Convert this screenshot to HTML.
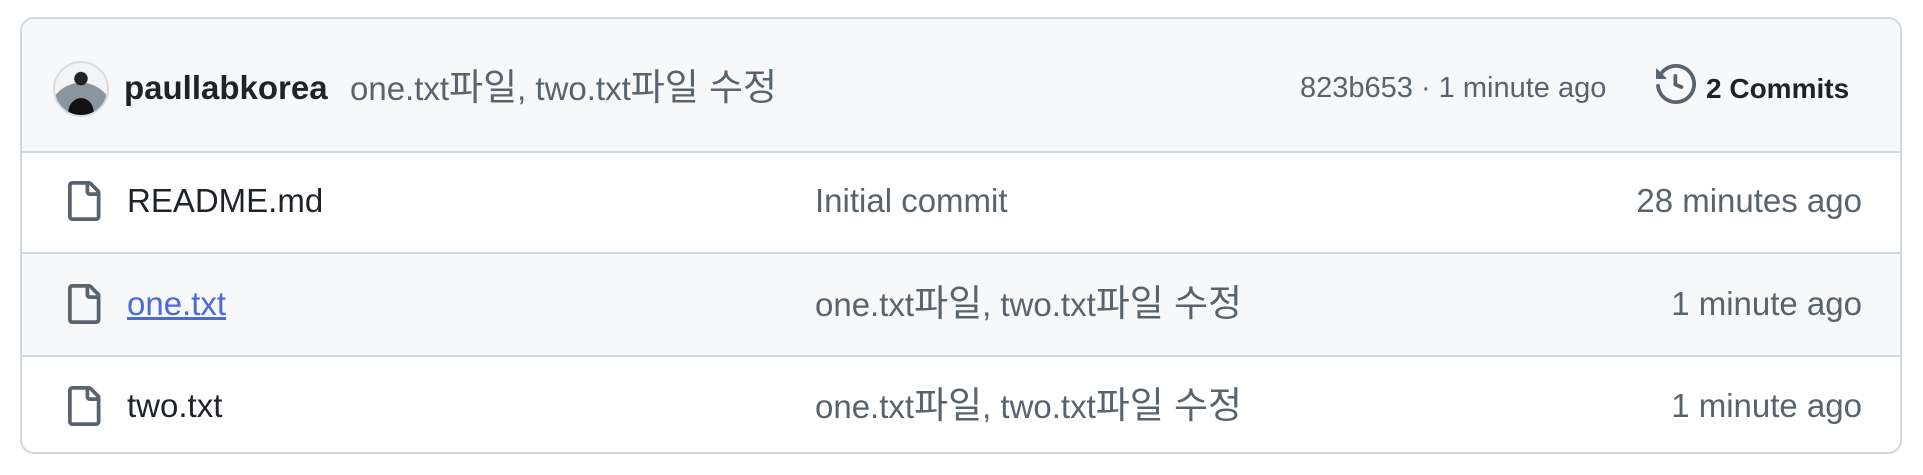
<!DOCTYPE html>
<html><head><meta charset="utf-8"><style>
body{margin:0;background:#fff;width:1923px;height:475px;font-family:"Liberation Sans","Noto Sans CJK KR",sans-serif;position:relative;overflow:hidden}
.box{position:absolute;left:20px;top:17px;width:1882px;height:437px;border:2px solid #d1d9e0;border-radius:14px;overflow:hidden;box-sizing:border-box}
.hdr{position:absolute;left:0;top:0;right:0;height:132px;background:#f6f8fa;border-bottom:2px solid #d1d9e0}
.row{position:absolute;left:0;right:0;height:101px;border-bottom:2px solid #d1d9e0;color:#1f2328}
.t{position:absolute;white-space:nowrap;line-height:1}
.k{font-size:1.12em;line-height:0.9}
.av{position:absolute;left:31px;top:42px;width:52px;height:52px;border-radius:50%;border:2px solid #d8dce0;background:radial-gradient(ellipse 40% 45% at 50% 95%,#111 0 60%,transparent 62%),radial-gradient(circle at 50% 30%,#222 0 14%,transparent 16%),radial-gradient(circle at 50% 100%,#8a959e 0 55%,#f3f4f5 56%);}
</style></head><body>
<div class="box">
 <div class="hdr">
  <div class="av"></div>
  <div class="t" style="left:102px;top:52px;font-size:33px;font-weight:bold;color:#1f2328">paullabkorea</div>
  <div class="t" style="left:328px;top:52px;font-size:33px;color:#59636e">one.txt<span class="k">파일</span>, two.txt<span class="k">파일 수정</span></div>
  <div class="t" style="left:1278px;top:55px;font-size:29px;color:#59636e">823b653 · 1 minute ago</div>
  <svg style="position:absolute;left:1634px;top:45px" width="40" height="40" viewBox="0 0 16 16" fill="#59636e"><path d="m.427 1.927 1.215 1.215a8.002 8.002 0 1 1-1.6 5.685.75.75 0 1 1 1.493-.154 6.5 6.5 0 1 0 1.18-4.458l1.358 1.358A.25.25 0 0 1 3.896 6H.25A.25.25 0 0 1 0 5.75V2.104a.25.25 0 0 1 .427-.177ZM7.750 4a.75.75 0 0 1 .75.75v2.992l2.028.812a.75.75 0 0 1-.557 1.392l-2.5-1A.751.751 0 0 1 7 8.25v-3.5A.75.75 0 0 1 7.75 4Z"/></svg>
  <div class="t" style="left:1684px;top:56px;font-size:28px;font-weight:bold;color:#1f2328">2 Commits</div>
 </div>
 <div class="row" style="top:132px">
  <svg style="position:absolute;left:41px;top:30px" width="40" height="40" viewBox="0 0 16 16" fill="#59636e"><path d="M2 1.75C2 .784 2.784 0 3.75 0h6.586c.464 0 .909.184 1.237.513l2.914 2.914c.329.328.513.773.513 1.237v9.586A1.75 1.75 0 0 1 13.25 16h-9.5A1.75 1.75 0 0 1 2 14.25Zm1.75-.25a.25.25 0 0 0-.25.25v12.5c0 .138.112.25.25.25h9.5a.25.25 0 0 0 .25-.25V6h-2.75A1.75 1.75 0 0 1 9 4.25V1.5Zm6.75.062V4.25c0 .138.112.25.25.25h2.688l-.011-.013-2.914-2.914-.013-.011Z"/></svg>
  <div class="t" style="left:105px;top:33px;font-size:33px">README.md</div>
  <div class="t" style="left:793px;top:33px;font-size:33px;color:#59636e">Initial commit</div>
  <div class="t" style="right:38px;top:33px;font-size:33px;color:#59636e">28 minutes ago</div>
 </div>
 <div class="row" style="top:235px;background:#f6f8fa">
  <svg style="position:absolute;left:41px;top:30px" width="40" height="40" viewBox="0 0 16 16" fill="#59636e"><path d="M2 1.75C2 .784 2.784 0 3.75 0h6.586c.464 0 .909.184 1.237.513l2.914 2.914c.329.328.513.773.513 1.237v9.586A1.75 1.75 0 0 1 13.25 16h-9.5A1.75 1.75 0 0 1 2 14.25Zm1.75-.25a.25.25 0 0 0-.25.25v12.5c0 .138.112.25.25.25h9.5a.25.25 0 0 0 .25-.25V6h-2.75A1.75 1.75 0 0 1 9 4.25V1.5Zm6.75.062V4.25c0 .138.112.25.25.25h2.688l-.011-.013-2.914-2.914-.013-.011Z"/></svg>
  <div class="t" style="left:105px;top:33px;font-size:33px;color:#4a6bd8;text-decoration:underline">one.txt</div>
  <div class="t" style="left:793px;top:33px;font-size:33px;color:#59636e">one.txt<span class="k">파일</span>, two.txt<span class="k">파일 수정</span></div>
  <div class="t" style="right:38px;top:33px;font-size:33px;color:#59636e">1 minute ago</div>
 </div>
 <div class="row" style="top:337px;border-bottom:none">
  <svg style="position:absolute;left:41px;top:30px" width="40" height="40" viewBox="0 0 16 16" fill="#59636e"><path d="M2 1.75C2 .784 2.784 0 3.75 0h6.586c.464 0 .909.184 1.237.513l2.914 2.914c.329.328.513.773.513 1.237v9.586A1.75 1.75 0 0 1 13.25 16h-9.5A1.75 1.75 0 0 1 2 14.25Zm1.75-.25a.25.25 0 0 0-.25.25v12.5c0 .138.112.25.25.25h9.5a.25.25 0 0 0 .25-.25V6h-2.75A1.75 1.75 0 0 1 9 4.25V1.5Zm6.75.062V4.25c0 .138.112.25.25.25h2.688l-.011-.013-2.914-2.914-.013-.011Z"/></svg>
  <div class="t" style="left:105px;top:33px;font-size:33px">two.txt</div>
  <div class="t" style="left:793px;top:33px;font-size:33px;color:#59636e">one.txt<span class="k">파일</span>, two.txt<span class="k">파일 수정</span></div>
  <div class="t" style="right:38px;top:33px;font-size:33px;color:#59636e">1 minute ago</div>
 </div>
</div>
</body></html>
